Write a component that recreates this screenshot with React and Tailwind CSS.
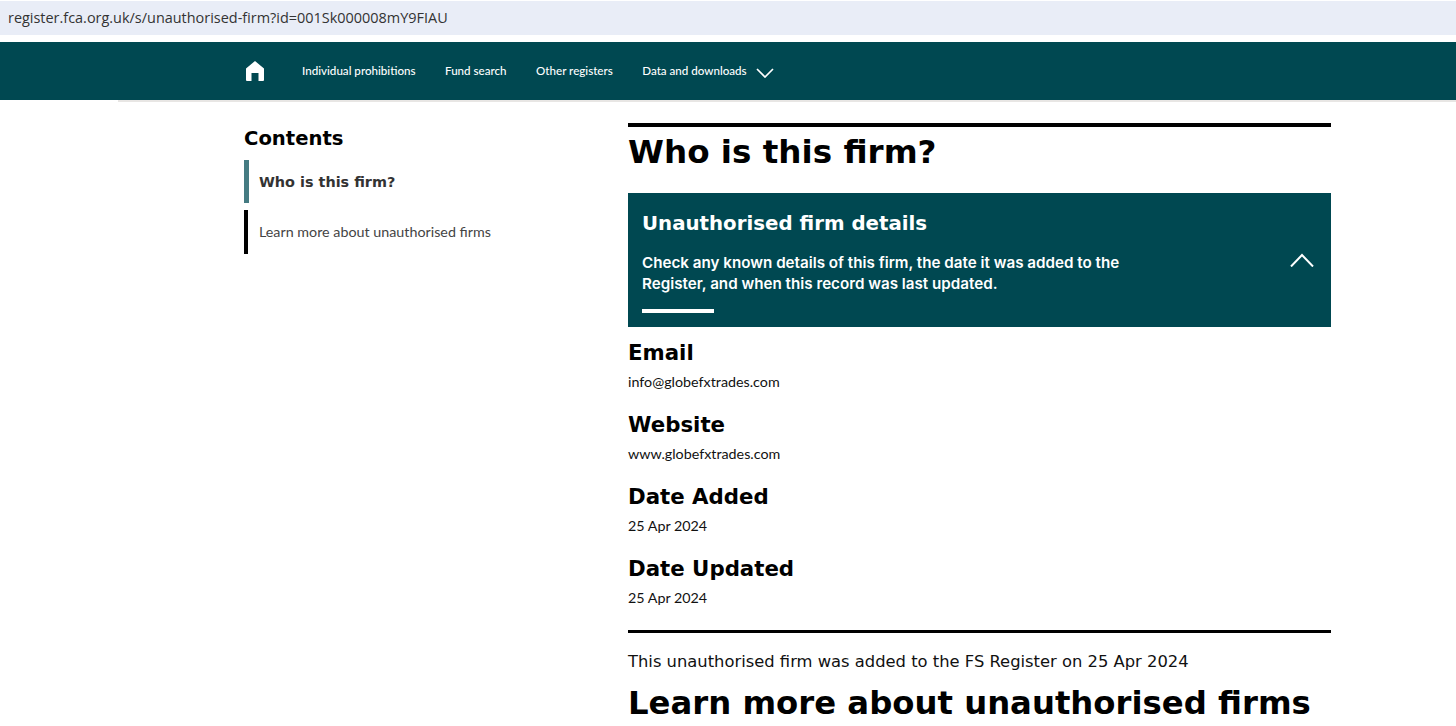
import React from "react";

const heading = "font-['DejaVu_Sans',sans-serif] font-bold text-black";
const lato = "font-['Lato',sans-serif]";

const navLinks = ["Individual prohibitions", "Fund search", "Other registers"];

const details = [
  { label: "Email", value: "info@globefxtrades.com" },
  { label: "Website", value: "www.globefxtrades.com" },
  { label: "Date Added", value: "25 Apr 2024" },
  { label: "Date Updated", value: "25 Apr 2024" },
];

const Detail = ({ label, value }) => (
  <div className="h-[72px]">
    <h3 className={`${heading} text-[21.3px] leading-[26px] pt-[13px]`}>{label}</h3>
    <p className={`${lato} text-[14.3px] leading-[18px] text-[#111] mt-[7px]`}>{value}</p>
  </div>
);

export default function App() {
  return (
    <div className="h-[726px] overflow-hidden bg-white">
      <div className="pt-px h-[42px]">
        <div className="h-[34px] bg-[#e9edf7] pl-2 flex items-center font-['Open_Sans',sans-serif] text-[14.45px] text-[#333]">
          register.fca.org.uk/s/unauthorised-firm?id=001Sk000008mY9FIAU
        </div>
      </div>

      <nav className={`${lato} h-[58px] bg-[#004851] pl-[246px] flex items-center text-white text-[11.6px] font-medium`}>
        <svg width="18" height="20" viewBox="0 0 18 20" className="mr-[38px]" fill="#fff">
          <path d="M9 0 L18 7.5 V19 Q18 20 17 20 H12.5 V12 H5.5 V20 H1 Q0 20 0 19 V7.5 Z" />
        </svg>
        {navLinks.map((l) => (
          <span key={l} className="mr-[29.5px]">{l}</span>
        ))}
        <span>Data and downloads</span>
        <svg width="18" height="10" viewBox="0 0 18 10" className="ml-[9px] mt-[3px]" fill="none" stroke="#fff" strokeWidth="1.7">
          <path d="M1 1 L9 9 L17 1" />
        </svg>
      </nav>
      <div className="h-0.5 ml-[118px] bg-[#e8e6e4]" />

      <div className="flex pl-[244px] pt-[21px]">
        <aside className="w-[384px] shrink-0">
          <h2 className={`${heading} text-[19.6px] leading-6 pt-[4px]`}>Contents</h2>
          <div className="mt-[9px] h-[43px] border-l-[5px] border-[#457b82] pl-[10px] pt-[2px] flex items-center font-['DejaVu_Sans',sans-serif] font-bold text-[14.4px] text-[#333]">
            Who is this firm?
          </div>
          <div className={`${lato} mt-[7px] h-[44px] border-l-4 border-black pl-[11px] flex items-center text-[14.3px] text-[#444]`}>
            Learn more about unauthorised firms
          </div>
        </aside>

        <main className="w-[703px] shrink-0">
          <div className="h-1 bg-black" />
          <h1 className={`${heading} text-[32.6px] leading-[44px] mt-[3px]`}>Who is this firm?</h1>

          <section className="mt-[19px] h-[134px] bg-[#004851] pl-[14px] pr-[17px] pt-[17px] flex justify-between text-white">
            <div>
              <h2 className="font-['DejaVu_Sans',sans-serif] font-bold text-[19.8px] leading-7">Unauthorised firm details</h2>
              <p className="font-['Inter',sans-serif] font-semibold text-[15.2px] leading-[21px] mt-[14px] w-[500px]">
                Check any known details of this firm, the date it was added to the Register, and when this record was last updated.
              </p>
              <div className="w-[72px] h-1 bg-white mt-[15px]" />
            </div>
            <svg width="24" height="14" viewBox="0 0 24 14" className="mt-[43px]" fill="none" stroke="#fff" strokeWidth="2">
              <path d="M1 13.5 L12 2 L23 13.5" />
            </svg>
          </section>

          <div className="pb-[15px]">
            {details.map((d) => (
              <Detail key={d.label} {...d} />
            ))}
          </div>

          <div className="h-[3px] bg-black" />
          <p className="font-['DejaVu_Sans',sans-serif] text-[16.35px] leading-6 text-[#111] mt-[17px]">
            This unauthorised firm was added to the FS Register on 25 Apr 2024
          </p>
          <h2 className={`${heading} text-[32.3px] leading-[44px] mt-[7px] whitespace-nowrap`}>Learn more about unauthorised firms</h2>
        </main>
      </div>
    </div>
  );
}
